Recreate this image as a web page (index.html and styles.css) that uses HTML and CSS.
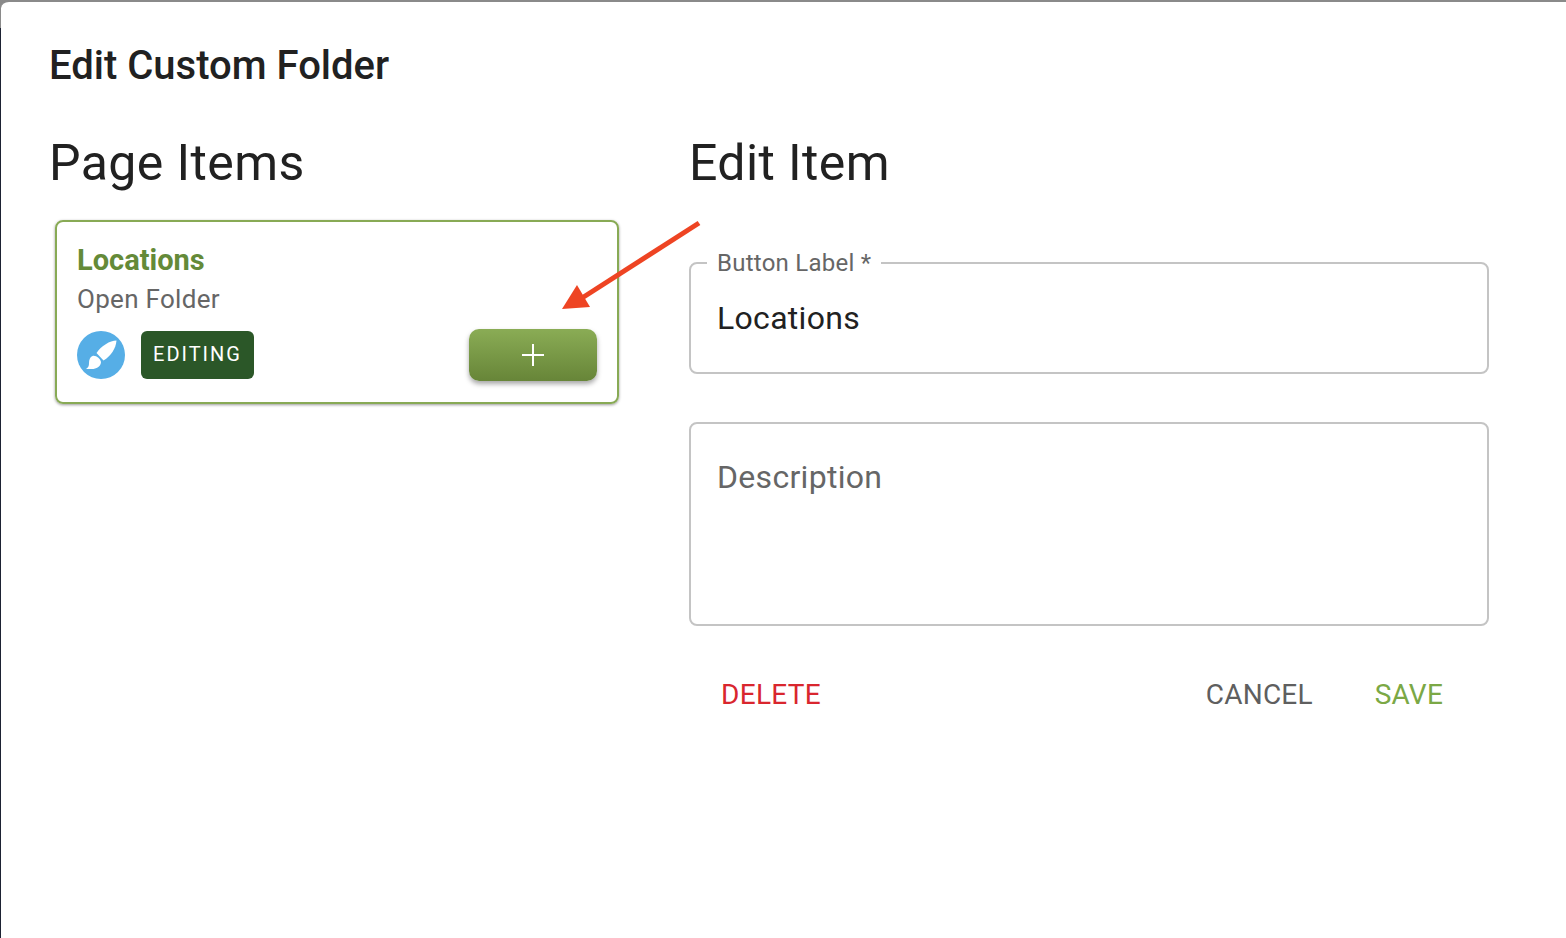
FILE: index.html
```html
<!DOCTYPE html>
<html lang="en">
<head>
  <meta charset="UTF-8">
  <title>Edit Custom Folder</title>
  <link rel="stylesheet" href="styles.css">
</head>
<body>
  <div class="dialog">
    <h1 class="dialog-title">Edit Custom Folder</h1>
    <div class="columns">
      <section class="col-left">
        <h2 class="col-title">Page Items</h2>
        <div class="item-card">
          <div class="item-name">Locations</div>
          <div class="item-type">Open Folder</div>
          <div class="item-row">
            <span class="brush-badge">
              <svg viewBox="0 0 48 48" width="48" height="48"><path fill="#fff" d="M39.5 9.5C33 9.5 24 15 19.5 22L26.5 29.5C34 25 39 17 39.5 9.5Z"/><path fill="#fff" d="M15.5 25C19 24 23.5 28 24 31C24 35.5 19 38 15 38L9 38C11.5 36 12 35 12 32C12 29 13 26 15.5 25Z"/></svg>
            </span>
            <span class="editing-tag">EDITING</span>
            <button class="add-btn">
              <svg viewBox="0 0 24 24" width="24" height="24"><path d="M12 1v22M1 12h22" stroke="#fff" stroke-width="2" fill="none"/></svg>
            </button>
          </div>
        </div>
      </section>
      <section class="col-right">
        <h2 class="col-title">Edit Item</h2>
        <fieldset class="field field-label">
          <legend>Button Label *</legend>
          <div class="field-value">Locations</div>
        </fieldset>
        <div class="field field-desc">Description</div>
        <div class="actions">
          <button class="text-btn delete">DELETE</button>
          <button class="text-btn cancel">CANCEL</button>
          <button class="text-btn save">SAVE</button>
        </div>
      </section>
    </div>
  </div>
  <svg class="arrow" width="150" height="100" viewBox="0 0 150 100">
    <path d="M139 3L22 78" stroke="#ee4423" stroke-width="5" fill="none"/>
    <path d="M2 89L17 65L30 87Z" fill="#ee4423"/>
  </svg>
</body>
</html>
```

FILE: styles.css
```css
html, body { margin: 0; height: 100%; }
body { font-family: Roboto, "Liberation Sans", sans-serif; background: linear-gradient(#8a8a8a 28px, #1d2233 28px); overflow: hidden; position: relative; }
.dialog { height: 938px; box-sizing: border-box; margin-left: 1px; padding: 24px 77px 0 48px; background: #fff; border-top: 2px solid #8a8a8a; border-top-left-radius: 8px; }
.dialog-title { margin: 17px 0 0; font-size: 40px; line-height: 46px; font-weight: 500; color: #212121; }
.columns { display: flex; margin-top: 46px; }
.col-left { width: 640px; }
.col-right { width: 800px; }
.col-title { margin: 0; font-size: 50px; line-height: 56px; font-weight: 400; letter-spacing: 0.4px; color: #212121; }
.item-card { box-sizing: border-box; width: 564px; height: 184px; margin: 29px 0 0 6px; padding: 20px 20px 0; border: 2px solid #88aa55; border-radius: 8px; box-shadow: 0 1px 3px rgba(0,0,0,.4); }
.item-name { font-size: 29px; line-height: 36px; font-weight: 700; color: #648a38; }
.item-type { margin-top: 3px; font-size: 26px; line-height: 36px; letter-spacing: 0.3px; color: #666; }
.item-row { display: flex; align-items: center; margin-top: 12px; }
.brush-badge { width: 48px; height: 48px; border-radius: 50%; background: #56aee6; display: flex; }
.editing-tag { margin-left: 16px; width: 113px; height: 48px; line-height: 47px; text-align: center; border-radius: 6px; background: #2b5728; color: #fff; font-size: 20px; letter-spacing: 2px; }
.add-btn { margin-left: auto; width: 128px; height: 52px; border: 0; border-radius: 10px; padding: 0; background: linear-gradient(#8aac55, #678538); box-shadow: 0 3px 5px rgba(0,0,0,.35); display: flex; align-items: center; justify-content: center; }
.field { box-sizing: border-box; border: 2px solid #c4c4c4; border-radius: 8px; margin: 0; min-width: 0; }
.field-label { height: 121px; margin-top: 62px; padding: 0 16px; }
.field-label legend { padding: 0 10px; font-size: 24px; line-height: 20px; letter-spacing: 0.25px; color: #666; }
.field-value { margin-top: 25px; padding-left: 10px; font-size: 32px; line-height: 40px; letter-spacing: 0.3px; color: #212121; }
.field-desc { height: 204px; margin-top: 48px; padding: 33px 26px 0; font-size: 32px; line-height: 40px; letter-spacing: 0.3px; color: #666; }
.actions { display: flex; margin-top: 49px; padding: 0 46px 0 32px; }
.text-btn { border: 0; background: none; padding: 0; font-family: inherit; font-size: 28px; line-height: 40px; letter-spacing: 0.2px; }
.delete { color: #d9262e; margin-right: auto; letter-spacing: 0.3px; }
.cancel { color: #5f5f5f; }
.save { color: #7ba845; margin-left: 62px; }
.arrow { position: absolute; left: 560px; top: 220px; }
```
